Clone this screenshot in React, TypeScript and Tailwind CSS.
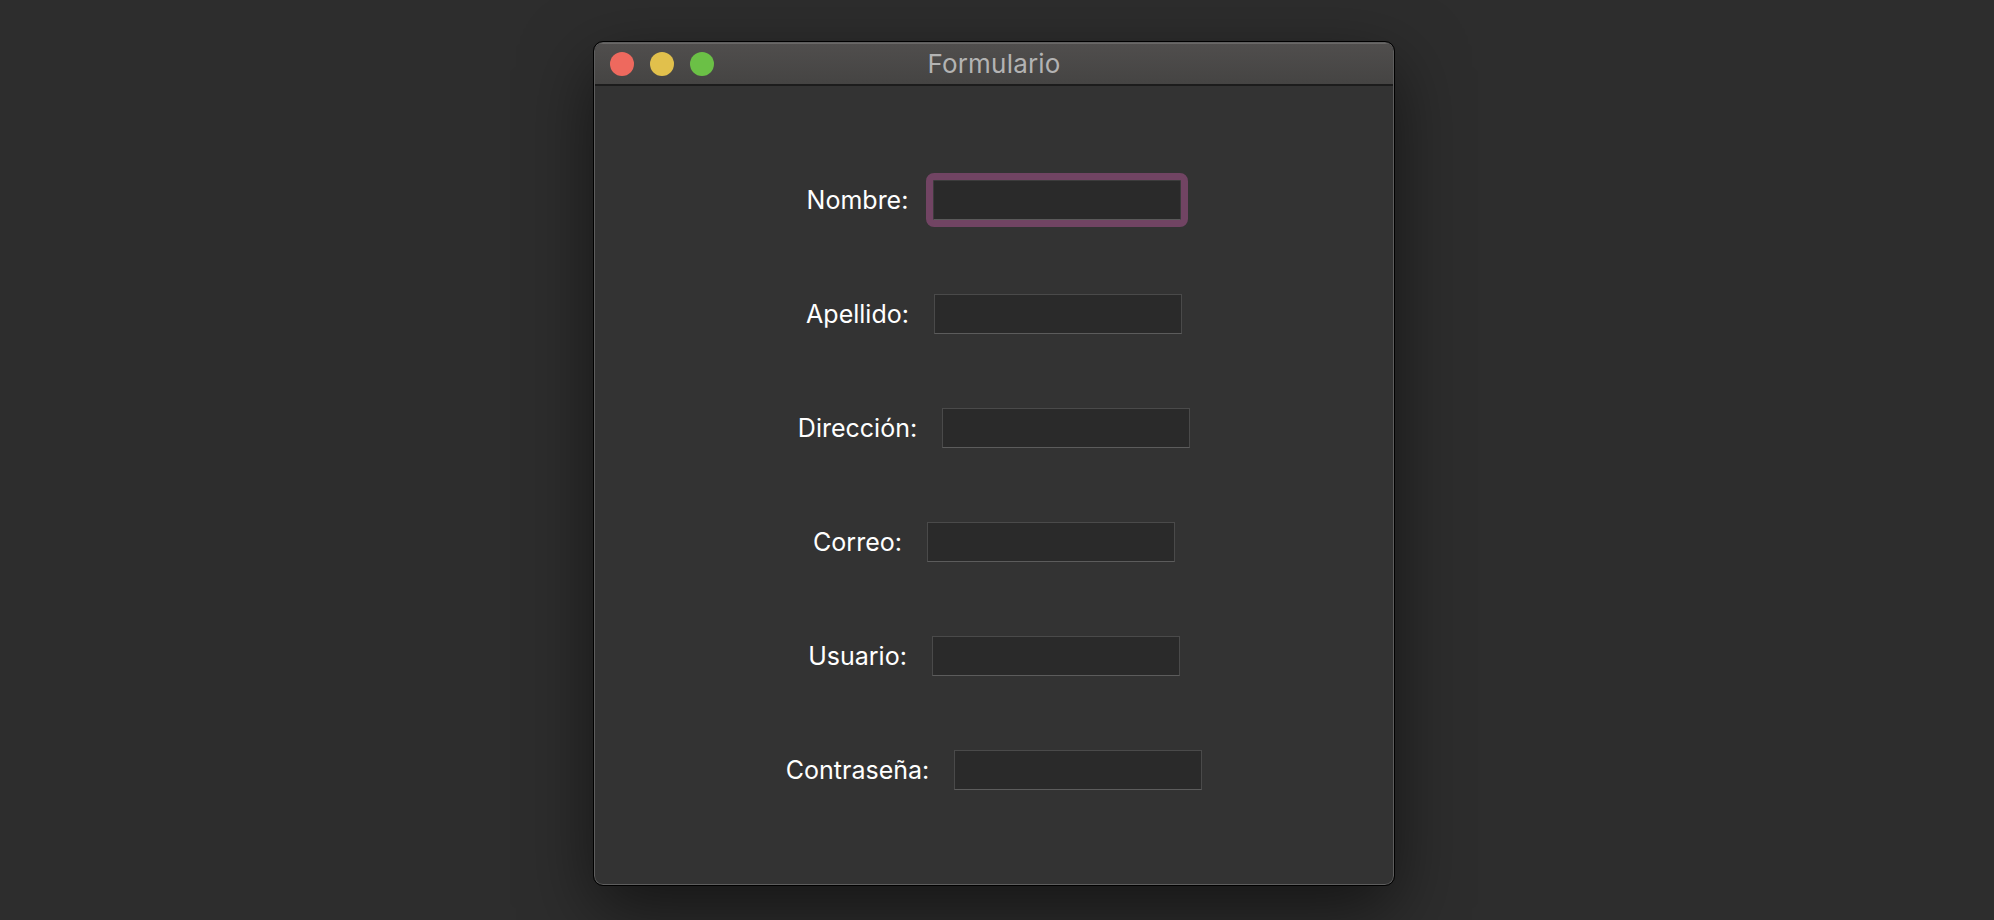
const campos = ["Nombre", "Apellido", "Dirección", "Correo", "Usuario", "Contraseña"];

export default function App() {
    return (
        <div
            className="min-h-[920px] w-full bg-[#2d2d2d] flex justify-center pt-[42px] pr-[6px]"
            style={{ fontFamily: "Inter, 'Noto Sans', sans-serif" }}
        >
            <div className="w-[800px] h-[843px] flex flex-col rounded-[9px] border border-[#5e5e5e] outline outline-1 outline-black bg-[#333333] shadow-[0_24px_70px_rgba(0,0,0,0.55)] overflow-hidden">
                {/* barra de título */}
                <div className="h-[43px] shrink-0 grid grid-cols-[1fr_auto_1fr] items-center bg-gradient-to-b from-[#504e4d] to-[#454443] border-b-2 border-[#1c1c1c] shadow-[inset_0_1px_0_#6a6867]">
                    <div className="flex items-center gap-[16px] pl-[15px]">
                        <span className="w-[24px] h-[24px] rounded-full bg-[#ee695e]" />
                        <span className="w-[24px] h-[24px] rounded-full bg-[#e1c04c]" />
                        <span className="w-[24px] h-[24px] rounded-full bg-[#6bc046]" />
                    </div>
                    <div className="text-[26px] leading-none text-[#b3b3b3] tracking-[0.2px]">Formulario</div>
                    <div />
                </div>

                {/* campos */}
                <div className="flex-1 flex flex-col items-center justify-center gap-[74px]">
                    {campos.map((c, i) => (
                        <div key={c} className="flex items-center gap-[25px]">
                            <span className="text-[25px] leading-none text-white">{c}:</span>
                            <div
                                className={
                                    i === 0
                                        ? "w-[248px] h-[40px] bg-[#2a2a2a] border border-[#3c3c3c] border-b-[#5a5a5a] rounded-[1px] outline outline-[7px] outline-[#714463]"
                                        : "w-[248px] h-[40px] bg-[#2a2a2a] border border-[#4a4a4a] border-b-[#5c5c5c]"
                                }
                            />
                        </div>
                    ))}
                </div>
            </div>
        </div>
    );
}
